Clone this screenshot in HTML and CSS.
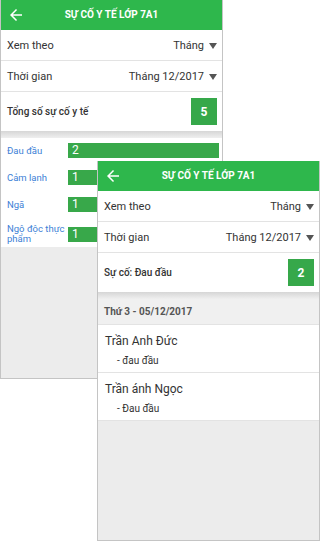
FILE: index.html
```html
<!DOCTYPE html>
<html lang="vi">
<head>
<meta charset="utf-8">
<title>Sự cố y tế lớp 7A1</title>
<link rel="stylesheet" href="styles.css">
</head>
<body>
<div class="stage">
  <section class="phone phone-back">
    <header class="appbar">
      <svg class="back" viewBox="0 0 24 24" width="18" height="18"><path d="M20 11H7.83l5.59-5.59L12 4l-8 8 8 8 1.41-1.41L7.83 13H20v-2z" fill="#fff"/></svg>
      <h1 class="title">SỰ CỐ Y TẾ LỚP 7A1</h1>
    </header>
    <div class="row"><span>Xem theo</span><span class="select">Tháng<i class="caret"></i></span></div>
    <div class="row"><span>Thời gian</span><span class="select">Tháng 12/2017<i class="caret"></i></span></div>
    <div class="row row-total"><span class="strong">Tổng số sự cố y tế</span><span class="count">5</span></div>
    <div class="sep"></div>
    <div class="chart">
      <div class="chart-row"><span class="label">Đau đầu</span><div class="track"><div class="bar" style="width:100%">2</div></div></div>
      <div class="chart-row"><span class="label">Cảm lạnh</span><div class="track"><div class="bar" style="width:50%">1</div></div></div>
      <div class="chart-row"><span class="label">Ngã</span><div class="track"><div class="bar" style="width:50%">1</div></div></div>
      <div class="chart-row"><span class="label">Ngộ độc thực phẩm</span><div class="track"><div class="bar" style="width:50%">1</div></div></div>
    </div>
    <div class="fill"></div>
  </section>

  <section class="phone phone-front">
    <header class="appbar">
      <svg class="back" viewBox="0 0 24 24" width="18" height="18"><path d="M20 11H7.83l5.59-5.59L12 4l-8 8 8 8 1.41-1.41L7.83 13H20v-2z" fill="#fff"/></svg>
      <h1 class="title">SỰ CỐ Y TẾ LỚP 7A1</h1>
    </header>
    <div class="row"><span>Xem theo</span><span class="select">Tháng<i class="caret"></i></span></div>
    <div class="row"><span>Thời gian</span><span class="select">Tháng 12/2017<i class="caret"></i></span></div>
    <div class="row row-total"><span class="strong">Sự cố: Đau đầu</span><span class="count">2</span></div>
    <div class="sep"></div>
    <div class="day">Thứ 3 - 05/12/2017</div>
    <div class="item"><div class="name">Trần Anh Đức</div><div class="sub">- đau đầu</div></div>
    <div class="item"><div class="name">Trần ánh Ngọc</div><div class="sub">- Đau đầu</div></div>
    <div class="fill"></div>
  </section>
</div>
</body>
</html>
```

FILE: styles.css
```css
* { box-sizing: border-box; }
html, body { margin: 0; padding: 0; background: #fff; }
body { font-family: Roboto, "Noto Sans", "Liberation Sans", sans-serif; color: #333; }

.stage { position: relative; width: 320px; height: 541px; overflow: hidden; }

.phone {
  position: absolute;
  width: 223px;
  height: 379px;
  background: #fff;
  border: 1px solid #c4c4c4;
  border-top: none;
  display: flex;
  flex-direction: column;
  overflow: hidden;
}
.phone-back { left: 0; top: 0; }
.phone-front { left: 97px; top: 161px; height: 380px; }

.appbar {
  height: 30px;
  flex: none;
  background: #2eb74c;
  display: flex;
  align-items: center;
  position: relative;
}
.back { position: absolute; left: 6px; top: 6px; }
.title {
  margin: 0;
  width: 100%;
  text-align: center;
  color: #fff;
  font-size: 10px;
  font-weight: 700;
  line-height: 30px;
}

.row {
  flex: none;
  height: 31px;
  border-bottom: 1px solid #e3e3e3;
  display: flex;
  align-items: center;
  justify-content: space-between;
  padding: 0 5px 0 6px;
  font-size: 11px;
  color: #333;
}
.select { display: flex; align-items: center; gap: 5px; }
.caret {
  display: block;
  width: 0; height: 0;
  border-left: 4.5px solid transparent;
  border-right: 4.5px solid transparent;
  border-top: 6px solid #555;
  margin-top: 1px;
}
.row-total { height: 39px; border-bottom: none; }
.strong { font-size: 10px; font-weight: 500; color: #333; }
.count {
  width: 26px;
  height: 27px;
  background: #36a84a;
  color: #fff;
  font-weight: 700;
  font-size: 12px;
  display: flex;
  align-items: center;
  justify-content: center;
}

.sep { flex: none; height: 7px; background: linear-gradient(#d6d6d6, #efefef); }

.chart {
  flex: none;
  display: flex;
  flex-direction: column;
  gap: 12px;
  padding: 5px 3px 3px 6px;
}
.chart-row { display: flex; align-items: center; min-height: 15px; }
.label {
  width: 61px;
  flex: none;
  font-size: 9.5px;
  line-height: 10px;
  color: #3d7fd6;
  padding-right: 3px;
}
.track { flex: 1; }
.bar {
  height: 15px;
  background: #38a84a;
  color: #fff;
  font-size: 12px;
  line-height: 15px;
  padding-left: 4px;
}

.fill { flex: 1; background: #ececec; }

.day {
  flex: none;
  height: 26px;
  line-height: 26px;
  background: #f0f0f0;
  border-bottom: 1px solid #e3e3e3;
  padding-left: 6px;
  font-size: 10px;
  font-weight: 700;
  color: #555;
}
.item {
  flex: none;
  padding: 8px 0 3px 7px;
  border-bottom: 1px solid #e3e3e3;
}
.item:last-of-type { border-bottom: none; }
.name { font-size: 12px; line-height: 16px; color: #333; }
.sub { font-size: 10px; line-height: 16px; margin-top: 4px; padding-left: 12px; color: #333; }
```
